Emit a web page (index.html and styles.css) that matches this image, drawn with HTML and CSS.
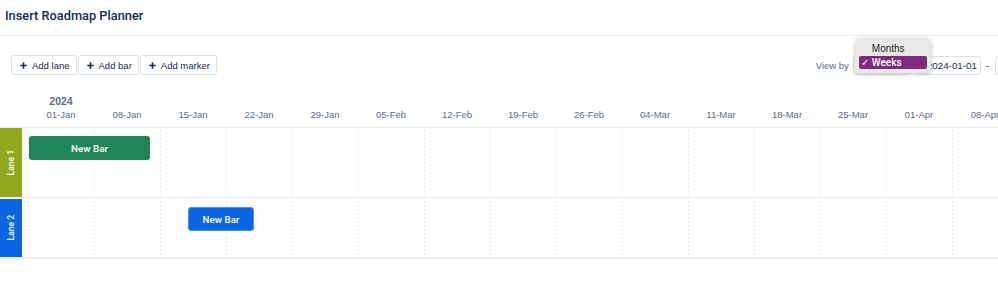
FILE: index.html
```html
<!DOCTYPE html>
<html lang="en">
<head>
    <meta charset="UTF-8">
    <meta name="viewport" content="width=device-width, initial-scale=1.0">
    <title>Insert Roadmap Planner</title>
    <link rel="stylesheet" href="styles.css">
</head>
<body>
    <div class="page">
        <header class="header">
            <h1>Insert Roadmap Planner</h1>
        </header>

        <div class="toolbar">
            <div class="actions">
                <button type="button" class="btn"><svg class="plus" width="7" height="7" viewBox="0 0 7 7"><path d="M3.5 0.3v6.4M0.3 3.5h6.4"/></svg>Add lane</button>
                <button type="button" class="btn"><svg class="plus" width="7" height="7" viewBox="0 0 7 7"><path d="M3.5 0.3v6.4M0.3 3.5h6.4"/></svg>Add bar</button>
                <button type="button" class="btn"><svg class="plus" width="7" height="7" viewBox="0 0 7 7"><path d="M3.5 0.3v6.4M0.3 3.5h6.4"/></svg>Add marker</button>
            </div>
            <div class="view">
                <span class="view-label">View by</span>
                <div class="select">
                    <ul class="menu">
                        <li class="menu-item">Months</li>
                        <li class="menu-item selected"><span class="check">&#10003;</span>Weeks</li>
                    </ul>
                </div>
                <div class="date-input">2024-01-01</div>
                <span class="dash">-</span>
                <div class="date-input"></div>
            </div>
        </div>

        <div class="timeline">
            <div class="scale">
                <div class="year">2024</div>
                <div class="weeks">
                    <div class="week">01-Jan</div>
                    <div class="week">08-Jan</div>
                    <div class="week">15-Jan</div>
                    <div class="week">22-Jan</div>
                    <div class="week">29-Jan</div>
                    <div class="week">05-Feb</div>
                    <div class="week">12-Feb</div>
                    <div class="week">19-Feb</div>
                    <div class="week">26-Feb</div>
                    <div class="week">04-Mar</div>
                    <div class="week">11-Mar</div>
                    <div class="week">18-Mar</div>
                    <div class="week">25-Mar</div>
                    <div class="week">01-Apr</div>
                    <div class="week">08-Apr</div>
                </div>
            </div>

            <div class="lane lane-one">
                <div class="lane-label"><span>Lane 1</span></div>
                <div class="lane-body">
                    <div class="bar bar-green" style="left: 1px; width: 121px;">New Bar</div>
                </div>
            </div>
            <div class="lane lane-two">
                <div class="lane-label"><span>Lane 2</span></div>
                <div class="lane-body">
                    <div class="bar bar-blue" style="left: 160px; width: 66px;">New Bar</div>
                </div>
            </div>
        </div>
    </div>
</body>
</html>
```

FILE: styles.css
```css
body {
    margin: 0;
    font-family: "Liberation Sans", Arial, sans-serif;
    background-color: #fff;
    color: #172b4d;
    overflow: hidden;
}
.page {
    width: 998px;
    height: 308px;
    overflow: hidden;
}
.header {
    height: 35px;
    border-bottom: 1px solid #ebecf0;
    display: flex;
    align-items: center;
    padding-left: 5px;
}
h1 {
    margin: 0;
    font-family: Roboto, sans-serif;
    font-size: 12.8px;
    font-weight: 500;
    color: #172b4d;
    line-height: 16px;
    padding-bottom: 3px;
}

/* toolbar */
.toolbar {
    display: flex;
    justify-content: space-between;
    align-items: center;
    width: 1059px;
    margin-top: 19px;
    padding-left: 11px;
    box-sizing: border-box;
}
.actions {
    display: flex;
    gap: 0;
}
.btn {
    display: flex;
    align-items: center;
    gap: 5px;
    height: 20px;
    margin: 0 1px 0 0;
    padding: 0 6px 0 8px;
    font-family: inherit;
    font-size: 9.5px;
    color: #172b4d;
    background-color: #fff;
    border: 1px solid #dfe1e6;
    border-radius: 3px;
    cursor: pointer;
}
.plus {
    stroke: #172b4d;
    stroke-width: 1.6;
    fill: none;
}
.view {
    display: flex;
    align-items: center;
}
.view-label {
    font-size: 9.5px;
    color: #5e6c84;
    margin-right: 4px;
}
.select {
    position: relative;
    width: 57px;
    height: 20px;
    border: 1px solid #dfe1e6;
    border-radius: 3px;
    box-sizing: border-box;
    margin-right: 7px;
}
.menu {
    position: absolute;
    left: 1px;
    top: -18px;
    width: 76px;
    margin: 0;
    padding: 4px;
    box-sizing: border-box;
    list-style: none;
    background-color: #e8e8e8;
    border-radius: 5px;
    box-shadow: 0 1px 4px rgba(0, 0, 0, 0.25);
}
.menu-item {
    position: relative;
    height: 13px;
    line-height: 13px;
    padding-left: 13px;
    font-size: 10px;
    color: #222;
}
.menu-item + .menu-item {
    margin-top: 1px;
}
.menu-item.selected {
    background-color: #7e2a80;
    color: #fff;
    font-family: Roboto, sans-serif;
    font-weight: 500;
    border-radius: 2px;
}
.check {
    position: absolute;
    left: 2px;
    font-weight: normal;
}
.date-input {
    width: 64px;
    height: 19px;
    border: 1px solid #dfe1e6;
    border-radius: 3px;
    box-sizing: border-box;
    font-size: 9.8px;
    color: #172b4d;
    display: flex;
    align-items: center;
    padding-left: 9px;
}
.dash {
    font-size: 9.5px;
    margin: 0 6px 0 5px;
    color: #172b4d;
}

/* timeline */
.timeline {
    margin-top: 19px;
}
.scale {
    padding-left: 28px;
    padding-bottom: 5px;
    border-bottom: 1px solid #ebecf0;
    box-shadow: 0 1px 1px rgba(9, 30, 66, 0.04);
}
.year {
    width: 66px;
    text-align: center;
    font-size: 10.5px;
    font-weight: bold;
    color: #5e6c84;
    line-height: 14px;
}
.weeks {
    display: flex;
}
.week {
    flex: 0 0 66px;
    text-align: center;
    font-size: 9.5px;
    color: #5e6c84;
    line-height: 14px;
}
.lane {
    display: flex;
    box-sizing: border-box;
}
.lane-one {
    height: 70px;
    border-bottom: 1px solid #e8eaed;
    margin-bottom: 1px;
}
.lane-two {
    height: 60px;
    border-bottom: 2px solid #eeeff1;
}
.lane-label {
    width: 22px;
    min-width: 0;
    flex: 0 0 22px;
    display: flex;
    align-items: center;
    justify-content: center;
    color: #fff;
    font-family: Roboto, sans-serif;
    font-size: 8.5px;
    font-weight: 500;
}
.lane-label span {
    writing-mode: vertical-rl;
    transform: rotate(180deg);
    white-space: nowrap;
}
.lane-one .lane-label {
    background-color: #94a81e;
}
.lane-two .lane-label {
    background-color: #0c66e4;
}
.lane-body {
    position: relative;
    flex: 1;
    margin-left: 6px;
    background-image:
        repeating-linear-gradient(to bottom, #fff 0 2px, transparent 2px 4px),
        repeating-linear-gradient(to right, #e6e8eb 0 1px, transparent 1px 66px);
}
.bar {
    position: absolute;
    top: 8px;
    height: 24px;
    border-radius: 3px;
    box-sizing: border-box;
    display: flex;
    align-items: center;
    justify-content: center;
    color: #fff;
    font-family: Roboto, sans-serif;
    font-size: 9.8px;
    font-weight: 500;
}
.bar-green {
    background-color: #1f845a;
}
.bar-blue {
    background-color: #0c66e4;
    border: 1px solid #4d8ef0;
}
```
